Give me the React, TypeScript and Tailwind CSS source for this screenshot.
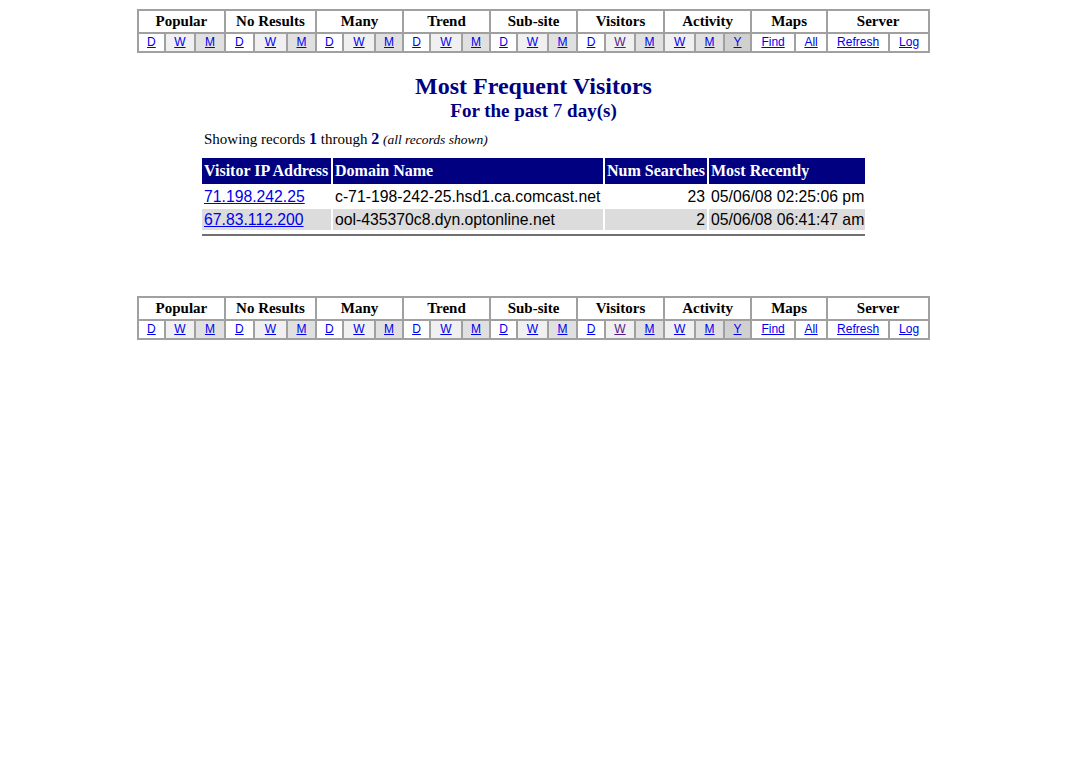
import React from 'react';

type Sub = { label: string; bg: string; visited?: boolean };
type Group = { title: string; subs: Sub[] };

const W0 = 'bg-white';
const W1 = 'bg-[#f0f0f0]';
const W2 = 'bg-[#e0e0e0]';
const W3 = 'bg-[#d0d0d0]';

const groups: Group[] = [
  { title: 'Popular', subs: [{ label: 'D', bg: W0 }, { label: 'W', bg: W1 }, { label: 'M', bg: W2 }] },
  { title: 'No Results', subs: [{ label: 'D', bg: W0 }, { label: 'W', bg: W1 }, { label: 'M', bg: W2 }] },
  { title: 'Many', subs: [{ label: 'D', bg: W0 }, { label: 'W', bg: W1 }, { label: 'M', bg: W2 }] },
  { title: 'Trend', subs: [{ label: 'D', bg: W0 }, { label: 'W', bg: W1 }, { label: 'M', bg: W2 }] },
  { title: 'Sub-site', subs: [{ label: 'D', bg: W0 }, { label: 'W', bg: W1 }, { label: 'M', bg: W2 }] },
  { title: 'Visitors', subs: [{ label: 'D', bg: W0 }, { label: 'W', bg: W1, visited: true }, { label: 'M', bg: W2 }] },
  { title: 'Activity', subs: [{ label: 'W', bg: W1 }, { label: 'M', bg: W2 }, { label: 'Y', bg: W3 }] },
  { title: 'Maps', subs: [{ label: 'Find', bg: W0 }, { label: 'All', bg: W0 }] },
  { title: 'Server', subs: [{ label: 'Refresh', bg: W0 }, { label: 'Log', bg: W0 }] },
];

const colWidths = [27, 30, 30, 29, 33, 29, 27, 32, 28, 27, 32, 28, 27, 31, 29, 28, 30, 29, 31, 29, 27, 44, 32, 62, 40];

const NavTable: React.FC = () => (
  <table className="mx-auto w-[791px] table-fixed border-collapse border-2 border-[#a0a0a0]">
    <colgroup>
      {colWidths.map((w, i) => (
        <col key={i} style={{ width: w }} />
      ))}
    </colgroup>
    <tbody>
      <tr className="h-[23px]">
        {groups.map(g => (
          <th
            key={g.title}
            colSpan={g.subs.length}
            className="border-2 border-[#a0a0a0] bg-white p-0 text-center text-[15px] font-bold leading-[19px] text-black"
          >
            {g.title}
          </th>
        ))}
      </tr>
      <tr className="h-[19px]">
        {groups.map(g =>
          g.subs.map((s, i) => (
            <td
              key={g.title + i}
              className={`border-2 border-[#a0a0a0] p-0 text-center font-['Liberation_Sans',Arial,sans-serif] text-[12px] leading-[15px] ${s.bg}`}
            >
              <a href="#" className={`underline ${s.visited ? 'text-[#551a8b]' : 'text-[#0000ee]'}`}>
                {s.label}
              </a>
            </td>
          ))
        )}
      </tr>
    </tbody>
  </table>
);

const rows = [
  { ip: '71.198.242.25', domain: 'c-71-198-242-25.hsd1.ca.comcast.net', num: 23, when: '05/06/08 02:25:06 pm', bg: 'bg-white' },
  { ip: '67.83.112.200', domain: 'ool-435370c8.dyn.optonline.net', num: 2, when: '05/06/08 06:41:47 am', bg: 'bg-[#dcdcdc]' },
];

const App: React.FC = () => {
  return (
    <div className="min-h-[768px] bg-white pt-[9px] font-['Liberation_Serif','Times_New_Roman',serif] text-black">
      <NavTable />

      {/* Title */}
      <div className="mt-[19px] text-center text-[#000080]">
        <div className="text-[24px] font-bold leading-[28px]">Most Frequent Visitors</div>
        <div className="text-[19px] font-bold leading-[22px]">
          For the past <span className="font-normal">7</span> day(s)
        </div>
      </div>

      <div className="mx-auto mt-[8px] w-[667px]">
        <div className="pl-[4px] text-[15px] leading-[18px]">
          Showing records <b className="text-[16px] text-[#000080]">1</b> through{' '}
          <b className="text-[16px] text-[#000080]">2</b>{' '}
          <i className="text-[13.5px]">(all records shown)</i>
        </div>

        <table className="mt-[7px] w-[667px] table-fixed border-separate border-spacing-[2px]">
          <colgroup>
            <col style={{ width: 129 }} />
            <col style={{ width: 270 }} />
            <col style={{ width: 102 }} />
            <col style={{ width: 156 }} />
          </colgroup>
          <thead>
            <tr className="h-[26px] bg-[#000080] text-white">
              <th className="px-[2px] text-left text-[16px] font-bold whitespace-nowrap">Visitor IP Address</th>
              <th className="px-[2px] text-left text-[16px] font-bold whitespace-nowrap">Domain Name</th>
              <th className="px-[2px] text-left text-[16px] font-bold whitespace-nowrap">Num Searches</th>
              <th className="px-[2px] text-left text-[16px] font-bold whitespace-nowrap">Most Recently</th>
            </tr>
          </thead>
          <tbody className="font-['Liberation_Sans',Arial,sans-serif] text-[15.75px]">
            {rows.map(r => (
              <tr key={r.ip} className={`h-[21px] ${r.bg}`}>
                <td className="px-[2px] leading-[20px] whitespace-nowrap">
                  <a href="#" className="text-[#0000ee] underline">{r.ip}</a>
                </td>
                <td className="px-[2px] leading-[20px] whitespace-nowrap">{r.domain}</td>
                <td className="px-[2px] text-right leading-[20px]">{r.num}</td>
                <td className="px-[2px] leading-[20px] whitespace-nowrap">{r.when}</td>
              </tr>
            ))}
            <tr>
              <td colSpan={4} className="p-0 pt-[2px]">
                <div className="h-[2px] bg-[#707070]" />
              </td>
            </tr>
          </tbody>
        </table>
      </div>

      <div className="mt-[58px]">
        <NavTable />
      </div>
    </div>
  );
};

export default App;
